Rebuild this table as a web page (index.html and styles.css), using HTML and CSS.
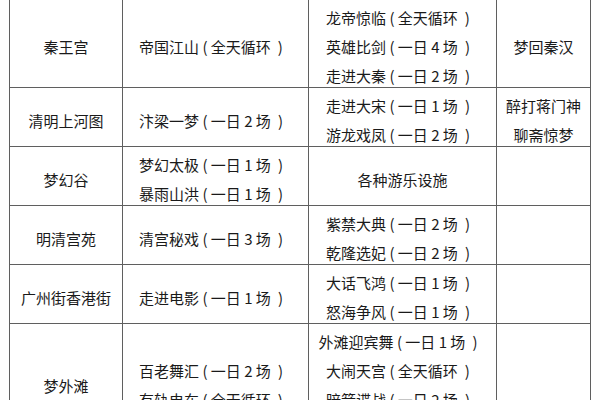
FILE: index.html
```html
<!DOCTYPE html>
<html lang="zh-CN">
<head>
<meta charset="utf-8">
<title>景区表演</title>
<link rel="stylesheet" href="styles.css">
</head>
<body>
<div class="sheet">
  <div class="grid">
    <div class="cell"><div class="ln">秦王宫</div></div>
    <div class="cell"><div class="ln">帝国江山 ( 全天循环<span class="cp">)</span></div></div>
    <div class="cell"><div class="ln">龙帝惊临 ( 全天循环<span class="cp">)</span></div><div class="ln">英雄比剑 ( 一日 4 场<span class="cp">)</span></div><div class="ln">走进大秦 ( 一日 2 场<span class="cp">)</span></div></div>
    <div class="cell"><div class="ln">梦回秦汉</div></div>

    <div class="cell"><div class="ln">清明上河图</div></div>
    <div class="cell"><div class="ln">汴梁一梦 ( 一日 2 场<span class="cp">)</span></div></div>
    <div class="cell"><div class="ln">走进大宋 ( 一日 1 场<span class="cp">)</span></div><div class="ln">游龙戏凤 ( 一日 2 场<span class="cp">)</span></div></div>
    <div class="cell"><div class="ln">醉打蒋门神</div><div class="ln">聊斋惊梦</div></div>

    <div class="cell"><div class="ln">梦幻谷</div></div>
    <div class="cell"><div class="ln">梦幻太极 ( 一日 1 场<span class="cp">)</span></div><div class="ln">暴雨山洪 ( 一日 1 场<span class="cp">)</span></div></div>
    <div class="cell"><div class="ln">各种游乐设施</div></div>
    <div class="cell"></div>

    <div class="cell"><div class="ln">明清宫苑</div></div>
    <div class="cell"><div class="ln">清宫秘戏 ( 一日 3 场<span class="cp">)</span></div></div>
    <div class="cell"><div class="ln">紫禁大典 ( 一日 2 场<span class="cp">)</span></div><div class="ln">乾隆选妃 ( 一日 2 场<span class="cp">)</span></div></div>
    <div class="cell"></div>

    <div class="cell"><div class="ln">广州街香港街</div></div>
    <div class="cell"><div class="ln">走进电影 ( 一日 1 场<span class="cp">)</span></div></div>
    <div class="cell"><div class="ln">大话飞鸿 ( 一日 1 场<span class="cp">)</span></div><div class="ln">怒海争风 ( 一日 1 场<span class="cp">)</span></div></div>
    <div class="cell"></div>

    <div class="cell"><div class="ln">梦外滩</div></div>
    <div class="cell"><div class="ln">百老舞汇 ( 一日 2 场<span class="cp">)</span></div><div class="ln">有轨电车 ( 全天循环<span class="cp">)</span></div></div>
    <div class="cell"><div class="ln">外滩迎宾舞 ( 一日 1 场<span class="cp">)</span></div><div class="ln">大闹天宫 ( 全天循环<span class="cp">)</span></div><div class="ln">暗箭谍战 ( 一日 2 场<span class="cp">)</span></div><div class="ln">上海滩 ( 一日 2 场<span class="cp">)</span></div></div>
    <div class="cell"></div>
  </div>
</div>
</body>
</html>
```

FILE: styles.css
```css
html, body {
  margin: 0;
  padding: 0;
  background: #ffffff;
}

body {
  font-family: "Noto Sans CJK SC", "Noto Sans", sans-serif;
  font-size: 15px;
  color: #1a1a1a;
  overflow: hidden;
}

.sheet {
  padding-left: 9px;
  margin-top: -1px;
}

.grid {
  display: grid;
  grid-template-columns: 113px 186px 188px 94px;
  width: 582px;
  box-sizing: border-box;
  border-right: 1px solid #5f5f5f;
  border-bottom: 1px solid #5f5f5f;
}

.cell {
  box-sizing: border-box;
  border-left: 1px solid #5f5f5f;
  border-top: 1px solid #5f5f5f;
  display: flex;
  flex-direction: column;
  justify-content: center;
  align-items: center;
  text-align: center;
  white-space: nowrap;
}

.ln {
  padding-top: 7px;
  line-height: 22px;
}

.cp {
  margin-left: 7px;
  margin-right: 9px;
}
```
